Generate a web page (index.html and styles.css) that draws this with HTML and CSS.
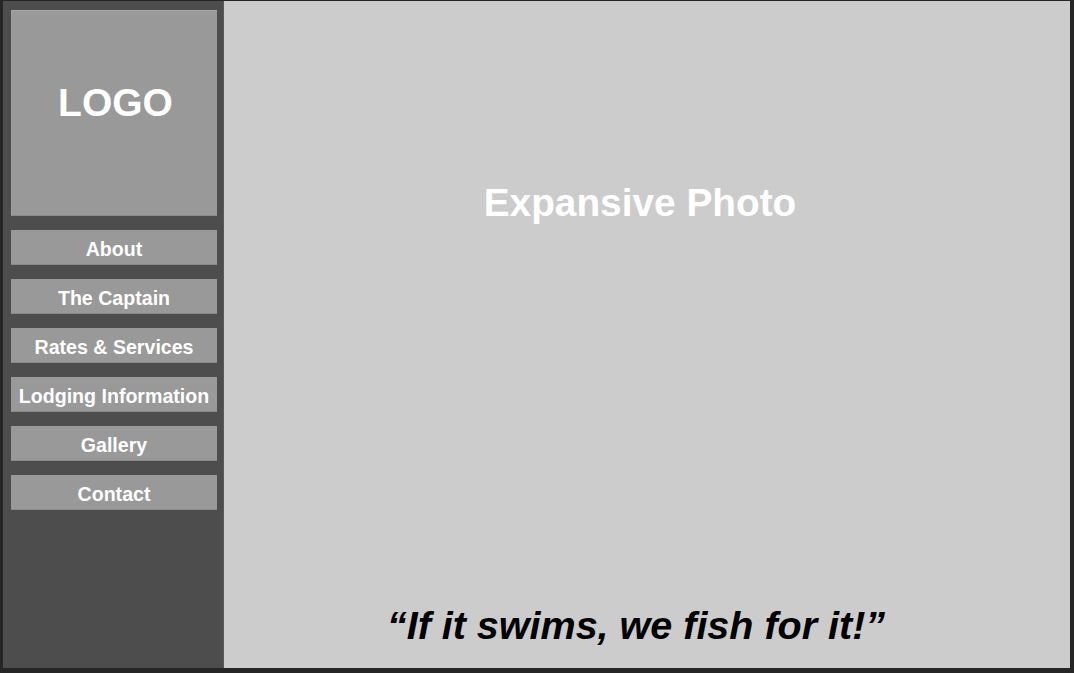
FILE: index.html
```html
<!DOCTYPE html>
<html>
<head>
<meta charset="utf-8">
<link rel="stylesheet" href="styles.css">
</head>
<body>
<div class="frame">
  <aside class="sidebar">
    <div class="logo">LOGO</div>
    <nav class="nav">
      <a class="nav-item">About</a>
      <a class="nav-item">The Captain</a>
      <a class="nav-item">Rates &amp; Services</a>
      <a class="nav-item">Lodging Information</a>
      <a class="nav-item">Gallery</a>
      <a class="nav-item">Contact</a>
    </nav>
  </aside>
  <main class="main">
    <h1 class="photo">Expansive Photo</h1>
    <p class="quote">“If it swims, we fish for it!”</p>
  </main>
</div>
</body>
</html>
```
FILE: styles.css
```css
html, body {
  margin: 0;
  padding: 0;
  background: #262626;
  font-family: "Liberation Sans", Arial, sans-serif;
}
body {
  width: 1074px;
  height: 673px;
  overflow: hidden;
  box-sizing: border-box;
  padding: 1px 4px 5px 3px;
}
.frame {
  display: flex;
  height: 667px;
}
.sidebar {
  width: 221px;
  flex: none;
  background: #4d4d4d;
  box-sizing: border-box;
  padding: 9px 6px 0 8px;
  border-right: 1px solid #5a5a5a;
}
.logo {
  height: 206px;
  box-sizing: border-box;
  background: #999999;
  border-top: 1px solid #a6a6a6;
  border-left: 1px solid #a0a0a0;
  border-bottom: 1px solid #8c8c8c;
  display: flex;
  align-items: center;
  justify-content: center;
  padding-bottom: 20px;
  padding-left: 2px;
  color: #ffffff;
  font-weight: bold;
  font-size: 39px;
}
.nav {
  display: flex;
  flex-direction: column;
  gap: 14px;
  margin-top: 14px;
}
.nav-item {
  height: 35px;
  box-sizing: border-box;
  background: #999999;
  border-bottom: 1px solid #8a8a8a;
  display: flex;
  align-items: center;
  justify-content: center;
  padding-top: 4px;
  color: #ffffff;
  font-weight: bold;
  font-size: 19.6px;
  white-space: nowrap;
}
.main {
  flex: 1;
  background: #cccccc;
  display: flex;
  flex-direction: column;
  align-items: center;
  padding-right: 14px;
}
.photo {
  margin: 181px 0 0 0;
  color: #ffffff;
  font-weight: bold;
  font-size: 38.8px;
  line-height: 42px;
}
.quote {
  margin: auto 0 22px 0;
  color: #000000;
  font-weight: bold;
  font-style: italic;
  font-size: 39.5px;
  line-height: 42px;
  padding-right: 8px;
}
```
